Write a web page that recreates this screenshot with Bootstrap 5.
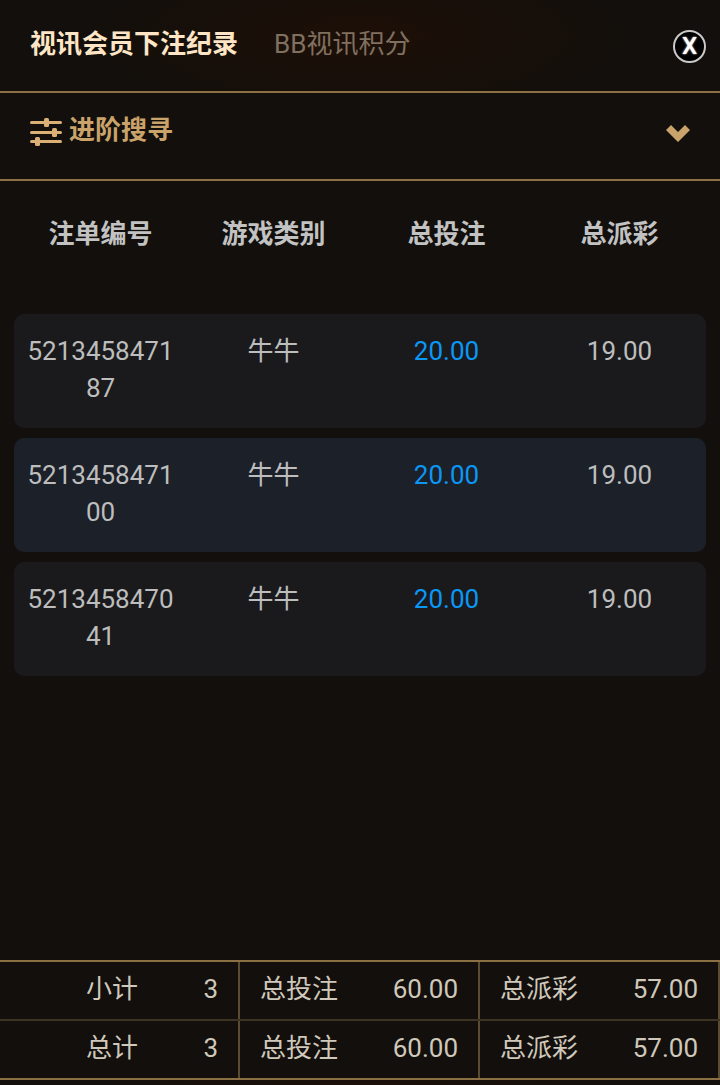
<!DOCTYPE html>
<html lang="zh">
<head>
    <meta charset="UTF-8">
    <meta name="viewport" content="width=device-width, initial-scale=1.0">
    <title>视讯会员下注纪录</title>
    <link href="https://cdn.jsdelivr.net/npm/bootstrap@5.3.0/dist/css/bootstrap.min.css" rel="stylesheet">
    <style>
        body {
            background: #120f0c;
            font-family: Roboto, "Noto Sans CJK SC", sans-serif;
            font-size: 26px;
            height: 1085px;
            overflow: hidden;
        }
        .page-wrap { height: 1085px; }
        .top-tabs {
            height: 93px;
            padding: 0 14px 0 30px;
            border-bottom: 2px solid #8a7043;
            background: radial-gradient(ellipse 300px 90px at 50% 40%, #1d0f07, #120f0c);
        }
        .tab-on { color: #fde5c5; font-weight: 700; line-height: 37px; margin-top: -3px; }
        .tab-off { color: #80705f; margin-left: 36px; line-height: 37px; margin-top: -3px; }
        .close-x {
            width: 33px;
            height: 33px;
            margin-top: 1px;
            border: 2px solid #c9c9c9;
            border-radius: 50%;
            background: #000;
            color: #fff;
            font-size: 24px;
            font-weight: 500;
            line-height: 1;
            text-shadow: 0 0 2px #fff;
        }
        .search-bar {
            height: 88px;
            padding: 0 30px 12px 30px;
            border-bottom: 2px solid #8a7043;
            color: #c9a36a;
            font-weight: 700;
        }
        .search-bar span { margin-left: 6px; line-height: 37px; }
        .slider-icon { margin-top: 3px; }
        .chevron-icon { margin-top: 6px; }
        .list-head {
            margin: 0 14px;
            height: 133px;
            color: #c2c2c2;
            font-weight: 700;
            padding-bottom: 26px;
        }
        .bet-row {
            margin: 0 14px 10px;
            height: 114px;
            padding-top: 19px;
            background: #1a1a1c;
            border-radius: 10px;
            color: #bdbdbd;
            line-height: 37px;
        }
        .bet-row.alt { background: #1c2029; }
        .bet-cols { display: flex; }
        .bet-cols > div { width: 173px; padding: 0 13px; word-break: break-all; }
        .bet-amt { color: #0a97f5; }
        .sum-wrap {
            height: 120px;
            border-top: 2px solid #8a7043;
            border-bottom: 2px solid #8a7043;
            color: #cfc8bb;
        }
        .sum-line { height: 57px; }
        .sum-line + .sum-line { border-top: 2px solid #3d3423; height: 59px; }
        .sum-cell {
            width: 240px;
            padding: 0 20px 2px 20px;
            border-right: 2px solid #5a4c30;
        }
        .sum-cell.first { padding-left: 86px; }
        .sum-foot {
            height: 5px;
            background: radial-gradient(ellipse 300px 10px at 50% 100%, #1d0f07, #120f0c);
        }
    </style>
</head>
<body>
    <div class="page-wrap d-flex flex-column">
        <div class="top-tabs d-flex align-items-center">
            <div class="tab-on">视讯会员下注纪录</div>
            <div class="tab-off">BB视讯积分</div>
            <div class="close-x ms-auto d-flex align-items-center justify-content-center">X</div>
        </div>

        <div class="search-bar d-flex align-items-center">
            <svg class="slider-icon" width="33" height="28" viewBox="0 0 33 28" fill="#dbb077">
                <rect x="0" y="3" width="32" height="3" rx="1.5"/>
                <rect x="14" y="0" width="5" height="9" rx="1.5"/>
                <rect x="0" y="13" width="32" height="3" rx="1.5"/>
                <rect x="22" y="10" width="5" height="9" rx="1.5"/>
                <rect x="0" y="22" width="32" height="3" rx="1.5"/>
                <rect x="5" y="19" width="5" height="9" rx="1.5"/>
            </svg>
            <span>进阶搜寻</span>
            <svg class="chevron-icon ms-auto" width="24" height="17" viewBox="0 0 24 17" fill="#c9a36a">
                <path d="M0 5 L5 0 L12 7 L19 0 L24 5 L12 17 Z"/>
            </svg>
        </div>

        <div class="list-head d-flex align-items-center text-center">
            <div class="col-3">注单编号</div>
            <div class="col-3">游戏类别</div>
            <div class="col-3">总投注</div>
            <div class="col-3">总派彩</div>
        </div>

        <div class="bet-row">
            <div class="bet-cols text-center">
                <div>521345847187</div>
                <div>牛牛</div>
                <div class="bet-amt">20.00</div>
                <div>19.00</div>
            </div>
        </div>
        <div class="bet-row alt">
            <div class="bet-cols text-center">
                <div>521345847100</div>
                <div>牛牛</div>
                <div class="bet-amt">20.00</div>
                <div>19.00</div>
            </div>
        </div>
        <div class="bet-row">
            <div class="bet-cols text-center">
                <div>521345847041</div>
                <div>牛牛</div>
                <div class="bet-amt">20.00</div>
                <div>19.00</div>
            </div>
        </div>

        <div class="sum-wrap mt-auto">
            <div class="sum-line d-flex">
                <div class="sum-cell first d-flex align-items-center justify-content-between"><span>小计</span><span>3</span></div>
                <div class="sum-cell d-flex align-items-center justify-content-between"><span>总投注</span><span>60.00</span></div>
                <div class="sum-cell d-flex align-items-center justify-content-between"><span>总派彩</span><span>57.00</span></div>
            </div>
            <div class="sum-line d-flex">
                <div class="sum-cell first d-flex align-items-center justify-content-between"><span>总计</span><span>3</span></div>
                <div class="sum-cell d-flex align-items-center justify-content-between"><span>总投注</span><span>60.00</span></div>
                <div class="sum-cell d-flex align-items-center justify-content-between"><span>总派彩</span><span>57.00</span></div>
            </div>
        </div>
        <div class="sum-foot"></div>
    </div>

    <script src="https://cdn.jsdelivr.net/npm/bootstrap@5.3.0/dist/js/bootstrap.bundle.min.js"></script>
</body>
</html>
